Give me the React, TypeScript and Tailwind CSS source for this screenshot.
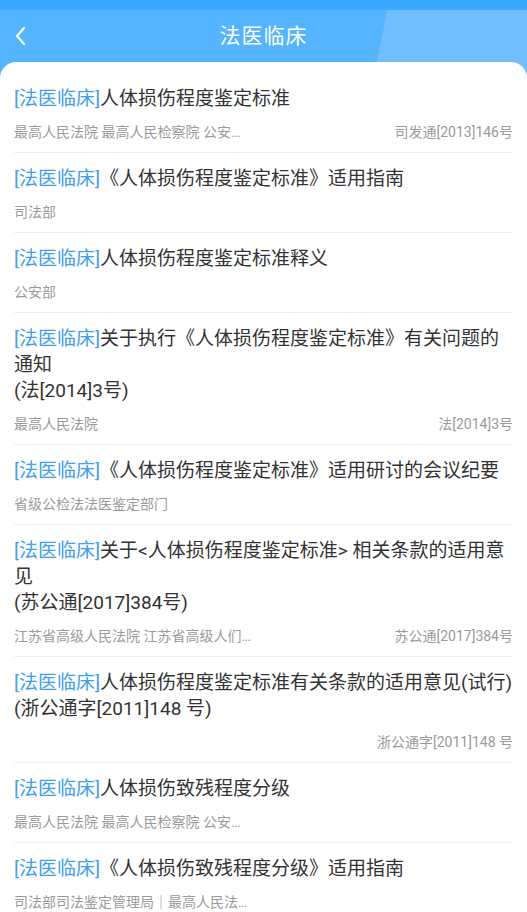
import React from "react";

type Item = { title: string; left: string; right: string };

const items: Item[] = [
  { title: "人体损伤程度鉴定标准", left: "最高人民法院 最高人民检察院 公安部 国家安全部 司法部", right: "司发通[2013]146号" },
  { title: "《人体损伤程度鉴定标准》适用指南", left: "司法部", right: "" },
  { title: "人体损伤程度鉴定标准释义", left: "公安部", right: "" },
  { title: "关于执行《人体损伤程度鉴定标准》有关问题的通知\n(法[2014]3号)", left: "最高人民法院", right: "法[2014]3号" },
  { title: "《人体损伤程度鉴定标准》适用研讨的会议纪要", left: "省级公检法法医鉴定部门", right: "" },
  { title: "关于<人体损伤程度鉴定标准> 相关条款的适用意见\n(苏公通[2017]384号)", left: "江苏省高级人民法院 江苏省高级人们检察院 江苏省公安厅", right: "苏公通[2017]384号" },
  { title: "人体损伤程度鉴定标准有关条款的适用意见(试行)\n(浙公通字[2011]148 号)", left: "", right: "浙公通字[2011]148 号" },
  { title: "人体损伤致残程度分级", left: "最高人民法院 最高人民检察院 公安部 国家安全部 司法部", right: "" },
  { title: "《人体损伤致残程度分级》适用指南", left: "司法部司法鉴定管理局｜最高人民法院｜最高人民检察院", right: "" },
];

const font = { fontFamily: "Roboto, 'Noto Sans CJK SC', sans-serif" };

export default function App() {
  return (
    <div
      className="relative flex h-[912px] w-full flex-col overflow-hidden bg-[#55b4ff]"
      style={font}
    >
      <svg
        className="absolute right-0 top-0"
        width="160"
        height="100"
        viewBox="0 0 160 100"
      >
        <path d="M22 0 Q14 45 1 100 L160 100 L160 0 Z" fill="#70bdff" />
      </svg>
      <div className="relative h-[10px] w-full shrink-0 bg-[#3aa8ff]" />
      <div className="relative flex h-[52px] shrink-0 items-center justify-center">
        <button className="absolute left-[12px] top-[15px] flex h-[22px] w-[16px] items-center justify-center">
          <svg width="12" height="20" viewBox="0 0 12 20" fill="none">
            <path d="M10 2 L3 10 L10 18" stroke="white" strokeWidth="2.2" strokeLinecap="round" strokeLinejoin="round" />
          </svg>
        </button>
        <span className="text-[21px] leading-none tracking-[1px] text-white">法医临床</span>
      </div>
      <div className="relative flex-1 shrink-0 rounded-t-[16px] bg-white pt-[11px]">
        {items.map((it, i) => (
          <div key={i} className="mx-[14px] border-b border-[#eceef4] pb-[10px] pt-[13px]">
            <div className="whitespace-pre-line text-[19px] leading-[26px] text-[#333333]">
              <span className="text-[#3d9ef6]">[法医临床]</span>
              {it.title}
            </div>
            <div className="mt-[10px] flex h-[20px] items-center justify-between text-[14px] leading-[20px] text-[#9a9a9a]">
              <span className="max-w-[240px] truncate">{it.left}</span>
              <span className="whitespace-nowrap">{it.right}</span>
            </div>
          </div>
        ))}
      </div>
    </div>
  );
}
